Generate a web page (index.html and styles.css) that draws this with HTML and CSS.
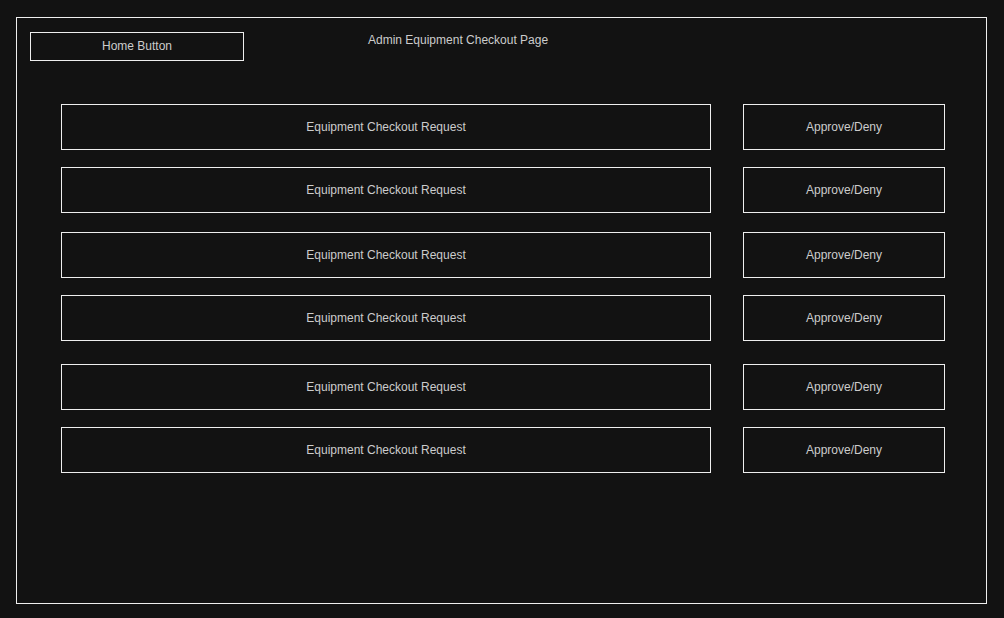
FILE: index.html
```html
<!DOCTYPE html>
<html lang="en">
<head>
<meta charset="utf-8">
<title>Admin Equipment Checkout Page</title>
<link rel="stylesheet" href="styles.css">
</head>
<body>
<div class="frame">
  <header class="header">
    <div class="home-btn">Home Button</div>
    <div class="title">Admin Equipment Checkout Page</div>
  </header>
  <main class="rows">
    <div class="row">
      <div class="request">Equipment Checkout Request</div>
      <div class="action">Approve/Deny</div>
    </div>
    <div class="row">
      <div class="request">Equipment Checkout Request</div>
      <div class="action">Approve/Deny</div>
    </div>
    <div class="row gap-md">
      <div class="request">Equipment Checkout Request</div>
      <div class="action">Approve/Deny</div>
    </div>
    <div class="row">
      <div class="request">Equipment Checkout Request</div>
      <div class="action">Approve/Deny</div>
    </div>
    <div class="row gap-lg">
      <div class="request">Equipment Checkout Request</div>
      <div class="action">Approve/Deny</div>
    </div>
    <div class="row">
      <div class="request">Equipment Checkout Request</div>
      <div class="action">Approve/Deny</div>
    </div>
  </main>
</div>
</body>
</html>
```

FILE: styles.css
```css
html, body {
  margin: 0;
  padding: 0;
  background: #121212;
}

body {
  font-family: "Liberation Sans", Arial, sans-serif;
  font-size: 12px;
  line-height: 14px;
  color: #cccccc;
}

.frame {
  box-sizing: border-box;
  margin: 17px 0 0 16px;
  width: 971px;
  height: 587px;
  border: 1px solid #eeeeee;
  padding: 14px 0 0 13px;
}

.header {
  display: flex;
  align-items: flex-start;
}

.home-btn {
  box-sizing: border-box;
  width: 214px;
  height: 29px;
  padding-bottom: 1px;
  border: 1px solid #eeeeee;
  display: flex;
  align-items: center;
  justify-content: center;
}

.title {
  margin-left: 124px;
  margin-top: 1px;
}

.rows {
  display: flex;
  flex-direction: column;
  gap: 17px;
  margin-top: 43px;
  padding-left: 31px;
}

.row {
  display: flex;
  gap: 32px;
}

.row.gap-md {
  margin-top: 2px;
}

.row.gap-lg {
  margin-top: 6px;
}

.request,
.action {
  box-sizing: border-box;
  height: 46px;
  border: 1px solid #eeeeee;
  display: flex;
  align-items: center;
  justify-content: center;
}

.request {
  width: 650px;
}

.action {
  width: 202px;
}
```
